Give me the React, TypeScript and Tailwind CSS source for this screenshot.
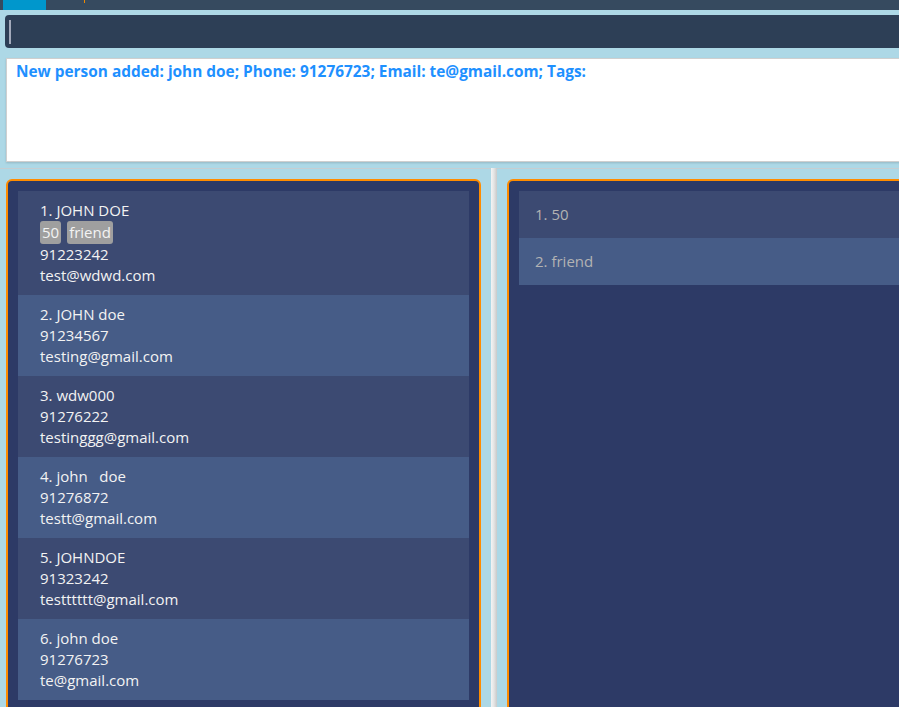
const people = [
  { name: '1. JOHN DOE', tags: ['50', 'friend'], phone: '91223242', email: 'test@wdwd.com' },
  { name: '2. JOHN doe', tags: [], phone: '91234567', email: 'testing@gmail.com' },
  { name: '3. wdw000', tags: [], phone: '91276222', email: 'testinggg@gmail.com' },
  { name: '4. john\u00a0\u00a0 doe', tags: [], phone: '91276872', email: 'testt@gmail.com' },
  { name: '5. JOHNDOE', tags: [], phone: '91323242', email: 'testttttt@gmail.com' },
  { name: '6. john doe', tags: [], phone: '91276723', email: 'te@gmail.com' },
]

const tagList = ['1. 50', '2. friend']

function PersonCard({ person, index }: { person: (typeof people)[number]; index: number }) {
  return (
    <div className={`px-[22px] py-[9px] leading-[21px] text-[#f3f3f3] ${index % 2 === 0 ? 'bg-[#3c4a72]' : 'bg-[#465c87]'}`}>
      <div>{person.name}</div>
      {person.tags.length > 0 && (
        <div className="flex gap-[6px]">
          {person.tags.map((t) => (
            <span key={t} className="bg-[#9f9f9f] rounded-[3px] px-[2px] leading-[23px]">
              {t}
            </span>
          ))}
        </div>
      )}
      <div>{person.phone}</div>
      <div>{person.email}</div>
    </div>
  )
}

export default function App() {
  return (
    <div className="w-[899px] h-[707px] overflow-hidden bg-[#add8e6] font-['Open_Sans',sans-serif] text-[15px]">
      <div className="w-[1000px]">
        {/* menu bar */}
        <div className="h-[10px] bg-[#364a5f] flex">
          <div className="ml-[3px] w-[43px] bg-[#0097cc]" />
          <div className="ml-[38px] w-[1px] h-[3px] bg-[#f08a00]" />
        </div>

        {/* command box */}
        <div className="px-[5px] pt-[5px]">
          <div className="h-[33px] bg-[#2d3f56] rounded-[4px] flex items-center pl-[4px]">
            <div className="w-[2px] h-[24px] bg-[#a3aabb]" />
          </div>
        </div>

        {/* result box */}
        <div className="pl-[6px] pt-[10px]">
          <div className="h-[104px] bg-white border border-[#cfcfcf] shadow-[0_1px_2px_rgba(0,0,0,0.15)] px-[9px] py-[3px]">
            <p className="text-[#1e90ff] font-bold text-[15.4px] leading-[20px]">
              New person added: john doe; Phone: 91276723; Email: te@gmail.com; Tags:
            </p>
          </div>
        </div>

        <div className="mt-[6px] h-[1px] bg-[#c6cdd1]" />

        {/* lists */}
        <div className="flex pl-[6px] pt-[10px] gap-[10px]">
          <div className="w-[475px] h-[540px] border-2 border-[#ff8c00] rounded-t-[6px] bg-[#2d3a66] p-[10px]">
            {people.map((p, i) => (
              <PersonCard key={i} person={p} index={i} />
            ))}
          </div>
          <div className="w-[6px] -mt-[11px] bg-gradient-to-r from-[#f4f4f4] via-[#e4e4e4] to-[#c9c9c9]" />
          <div className="flex-1 h-[540px] border-2 border-[#ff8c00] rounded-t-[6px] bg-[#2d3a66] p-[10px]">
            {tagList.map((t, i) => (
              <div
                key={t}
                className={`h-[47px] flex items-center px-[16px] text-[#b3b3b3] ${i % 2 === 0 ? 'bg-[#3c4a72]' : 'bg-[#465c87]'}`}
              >
                {t}
              </div>
            ))}
          </div>
        </div>
      </div>
    </div>
  )
}
